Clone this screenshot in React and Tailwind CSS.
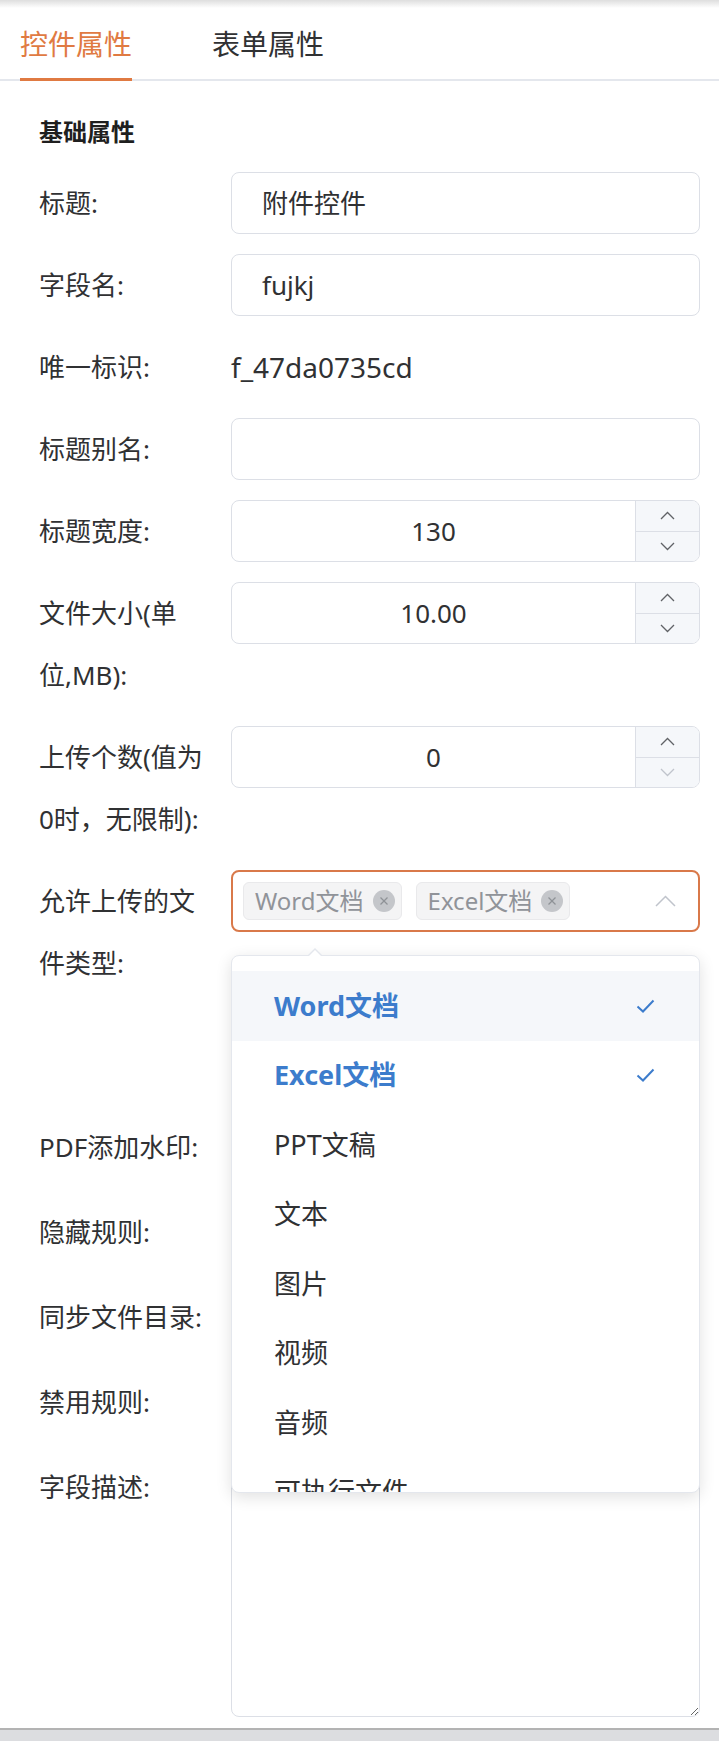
import React from "react";

function Label({ children, lh = "leading-[62px]" }) {
  return (
    <div className={`w-[192px] shrink-0 text-[26px] ${lh} text-[#303133]`}>
      {children}
    </div>
  );
}

function TextInput({ value }) {
  return (
    <div className="flex-1 h-[62px] rounded-[8px] border-[1.5px] border-[#dcdfe6] bg-white flex items-center pl-[30px] text-[26px] text-[#303133]">
      {value}
    </div>
  );
}

function Chevron({ up, color }) {
  return (
    <svg width="15" height="9" viewBox="0 0 15 9" fill="none">
      <polyline
        points={up ? "1,8 7.5,1.5 14,8" : "1,1 7.5,7.5 14,1"}
        stroke={color}
        strokeWidth="1.3"
      />
    </svg>
  );
}

function NumberInput({ value, downDisabled }) {
  return (
    <div className="flex-1 h-[62px] rounded-[8px] border-[1.5px] border-[#dcdfe6] bg-white flex overflow-hidden">
      <div className="flex-1 flex items-center justify-center text-[26px] text-[#303133]">
        {value}
      </div>
      <div className="w-[64px] border-l-[1.5px] border-[#dcdfe6] bg-[#f5f7fa] flex flex-col">
        <div className="flex-1 flex items-center justify-center border-b-[1.5px] border-[#dcdfe6]">
          <Chevron up color="#606266" />
        </div>
        <div className="flex-1 flex items-center justify-center">
          <Chevron color={downDisabled ? "#c0c4cc" : "#606266"} />
        </div>
      </div>
    </div>
  );
}

function Tag({ text }) {
  return (
    <div className="h-[38px] flex items-center pl-[11px] pr-[6px] rounded-[6px] bg-[#f4f4f5] border border-[#e9e9eb] text-[24px] text-[#909399]">
      <span>{text}</span>
      <span className="ml-[9px] w-[22px] h-[22px] rounded-full bg-[#c4c6ca] flex items-center justify-center">
        <svg width="10" height="10" viewBox="0 0 10 10">
          <line x1="1.5" y1="1.5" x2="8.5" y2="8.5" stroke="#8f9297" strokeWidth="1.3" />
          <line x1="8.5" y1="1.5" x2="1.5" y2="8.5" stroke="#8f9297" strokeWidth="1.3" />
        </svg>
      </span>
    </div>
  );
}

function Check() {
  return (
    <svg width="19" height="14" viewBox="0 0 19 14" fill="none">
      <polyline points="1.5,7.5 7,12.5 17.5,1.5" stroke="#3c7ccc" strokeWidth="2" />
    </svg>
  );
}

const options = [
  { t: "Word文档", sel: true, hover: true },
  { t: "Excel文档", sel: true },
  { t: "PPT文稿" },
  { t: "文本" },
  { t: "图片" },
  { t: "视频" },
  { t: "音频" },
  { t: "可执行文件" },
];

export default function App() {
  return (
    <div className="w-[719px] h-[1741px] bg-white flex flex-col font-['Noto_Sans','Noto_Sans_CJK_SC',sans-serif] overflow-hidden">
      <div className="h-[8px] bg-linear-to-b from-[#dedede] to-white shrink-0" />
      {/* Tabs */}
      <div className="h-[73px] shrink-0 border-b-2 border-[#e4e7ed] flex pl-[20px] text-[28px]">
        <div className="relative h-full flex items-center pr-[40px] text-[#e07a42]">
          <span>控件属性</span>
          <div className="absolute left-0 right-[40px] bottom-[-2px] h-[3px] bg-[#e07a42]" />
        </div>
        <div className="h-full flex items-center pl-[40px] text-[#303133]">表单属性</div>
      </div>

      {/* Body */}
      <div className="pl-[39px] pr-[19px] pt-[35px]">
        <div className="text-[24px] font-bold leading-[32px] text-[#1f1f1f] mb-[24px]">基础属性</div>

        <div className="flex mb-[20px]">
          <Label>标题:</Label>
          <TextInput value="附件控件" />
        </div>
        <div className="flex mb-[20px]">
          <Label>字段名:</Label>
          <TextInput value="fujkj" />
        </div>
        <div className="flex mb-[20px]">
          <Label>唯一标识:</Label>
          <div className="flex-1 text-[28px] leading-[62px] text-[#303133]">f_47da0735cd</div>
        </div>
        <div className="flex mb-[20px]">
          <Label>标题别名:</Label>
          <TextInput value="" />
        </div>
        <div className="flex mb-[20px]">
          <Label>标题宽度:</Label>
          <NumberInput value="130" />
        </div>
        <div className="flex items-start mb-[20px]">
          <Label>
            文件大小(单
            <br />
            位,MB):
          </Label>
          <NumberInput value="10.00" />
        </div>
        <div className="flex items-start mb-[20px]">
          <Label>
            上传个数(值为
            <br />
            0时，无限制):
          </Label>
          <NumberInput value="0" downDisabled />
        </div>
        <div className="flex items-start mb-[20px]">
          <Label>
            允许上传的文
            <br />
            件类型:
          </Label>
          <div className="flex-1 relative">
            <div className="h-[62px] rounded-[8px] border-2 border-[#d9794a] bg-white flex items-center pl-[10px] pr-[22px] gap-[14px]">
              <Tag text="Word文档" />
              <Tag text="Excel文档" />
              <div className="flex-1" />
              <svg width="21" height="12" viewBox="0 0 21 12" fill="none">
                <polyline points="1,11 10.5,1.5 20,11" stroke="#c0c4cc" strokeWidth="1.5" />
              </svg>
            </div>
            {/* Dropdown */}
            <div className="absolute left-0 right-0 top-[85px] z-10">
              <div className="absolute left-[76px] top-[-7px] w-0 h-0 border-l-[8px] border-r-[8px] border-b-[8px] border-l-transparent border-r-transparent border-b-[#e4e7ed]" />
              <div className="absolute left-[77px] top-[-5.5px] w-0 h-0 border-l-[7px] border-r-[7px] border-b-[7px] border-l-transparent border-r-transparent border-b-white" />
              <div className="h-[538px] rounded-[8px] border border-[#e4e7ed] bg-white shadow-[0_4px_16px_rgba(0,0,0,0.12)] overflow-hidden pt-[15px]">
                {options.map((o) => (
                  <div
                    key={o.t}
                    className={`h-[69.5px] flex items-center justify-between pl-[42px] pr-[44px] text-[27px] ${
                      o.hover ? "bg-[#f5f7fa]" : ""
                    } ${o.sel ? "font-bold text-[#3c7ccc]" : "text-[#303133]"}`}
                  >
                    <span>{o.t}</span>
                    {o.sel && <Check />}
                  </div>
                ))}
              </div>
            </div>
          </div>
        </div>

        <div className="h-[81px] mb-[20px]" />

        {["PDF添加水印:", "隐藏规则:", "同步文件目录:", "禁用规则:"].map((l) => (
          <div key={l} className="flex h-[65px] mb-[20px]">
            <Label lh="leading-[65px]">{l}</Label>
          </div>
        ))}

        <div className="flex">
          <Label lh="leading-[65px]">字段描述:</Label>
          <textarea
            className="flex-1 h-[262px] rounded-[8px] border-[1.5px] border-[#dcdfe6] bg-white resize-y outline-none"
            defaultValue=""
          />
        </div>
      </div>

      <div className="mt-auto h-[13px] shrink-0 border-t-2 border-[#b3b3b3] bg-[#dcdde0]" />
    </div>
  );
}
